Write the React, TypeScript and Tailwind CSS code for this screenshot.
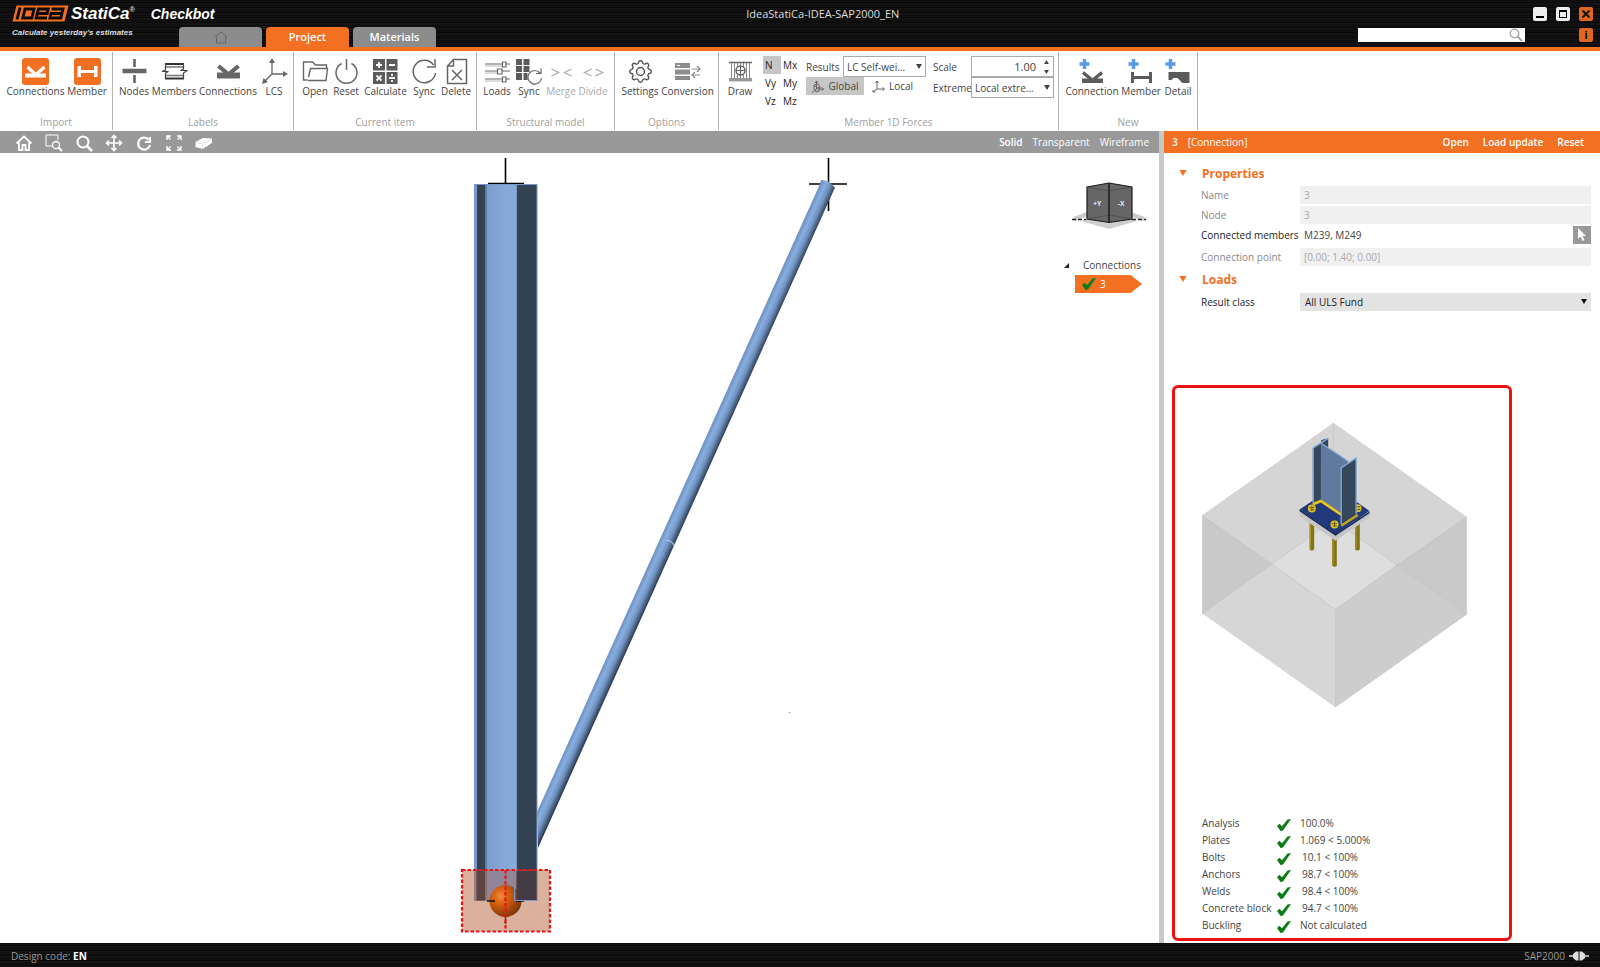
import type { ReactNode } from 'react';
import { BsGear } from 'react-icons/bs';

interface IconProps {
  children: ReactNode;
  viewBox?: string;
  className?: string;
}

function Icon({ children, viewBox = '0 0 27 27', className = 'h-[27px] w-[27px]' }: IconProps) {
  return (
    <svg
      viewBox={viewBox}
      className={className}
      fill="none"
      stroke="#666"
      strokeWidth="1.5"
      aria-hidden="true"
    >
      {children}
    </svg>
  );
}

const icons = {
  importConnections: (
    <Icon>
      <rect width="27" height="27" rx="3" fill="#f36f21" stroke="none" />
      <path d="M3 15.500h21v4H3z" fill="#fff" stroke="none" />
      <path d="M5.500 9l7.500 7M22.500 9L14.500 16" stroke="#fff" strokeWidth="3.200" />
    </Icon>
  ),
  importMember: (
    <Icon>
      <rect width="27" height="27" rx="3" fill="#f36f21" stroke="none" />
      <path d="M3.500 8h3.500v4h13V8h3.500v11H20v-4H7v4H3.500z" fill="#fff" stroke="none" />
    </Icon>
  ),
  nodes: (
    <Icon>
      <path d="M13.500 1v8M13.500 17v8" strokeWidth="2.600" />
      <path d="M1.500 13H25.500" strokeWidth="4.500" />
    </Icon>
  ),
  members: (
    <Icon>
      <path d="M4 6h19M4 20.500h19" stroke="#333" strokeWidth="2" />
      <path d="M4 9h19M4 17.500h19" stroke="#777" strokeWidth="1.500" />
      <path d="M4.500 5v7L1 13.500h6.500L4.500 15v6M22.500 5v6l-3 1.500H26L22.500 15v6" stroke="#444" strokeWidth="1.200" />
    </Icon>
  ),
  labelConnections: (
    <Icon>
      <path d="M2 14.500h23v6H2z" fill="#666" stroke="none" />
      <path d="M3.500 8l9.500 8M23.500 8L14 16" strokeWidth="4.200" />
    </Icon>
  ),
  lcs: (
    <Icon>
      <path d="M11 3v13h13M11 16l-8 8" strokeWidth="1.300" />
      <path d="M11 0l3 5H8zM27 16l-5 3v-6zM1 26l1.500-6L7 24z" fill="#666" stroke="none" />
    </Icon>
  ),
  open: (
    <Icon>
      <path d="M5.500 22H1.500V4h9l3 3h11v3M6 22.500h18l1.500-12H8.500L6.500 19" strokeWidth="1.400" />
    </Icon>
  ),
  reset: (
    <Icon>
      <path d="M13.500 1v11M8.500 5.500a10.500 10.500 0 1 0 10 0" />
    </Icon>
  ),
  calculate: (
    <Icon>
      <path d="M1 1h12v11.500H1zM14.500 1h11v11.500h-11zM1 14h12v12H1zM14.500 14h11v12h-11z" fill="#5b5b5b" stroke="none" />
      <path
        d="M4 7h6M7 4v6M17 7h6M4.500 17.500l5 5M9.500 17.500l-5 5M17 20h6M20 16v2M20 22v2"
        stroke="#fff"
        strokeWidth="1.800"
      />
    </Icon>
  ),
  sync: (
    <Icon>
      <path d="M24.500 15A11.200 11.200 0 1 1 22.500 7M24 1v8h-8" />
    </Icon>
  ),
  remove: (
    <Icon>
      <path d="M10.500 1.500h13v24h-19V8zM10.500 1.500V8h-6M9 12l10 10M19 12L9 22" />
    </Icon>
  ),
  loads: (
    <Icon>
      <path d="M1 6h17M22 6h4M1 13h12M18 13h8M1 21h17M22 21h4" strokeWidth="1.200" />
      <path d="M1 8h17M1 15h12M1 23h17" stroke="#bbb" strokeWidth="1" />
      <path d="M18.500 4h3.500v5h-3.500zM13.500 11H18v5h-4.500zM18.500 19h3.500v5h-3.500z" strokeWidth="1.200" />
    </Icon>
  ),
  modelSync: (
    <Icon>
      <path d="M0 1h6v6H0zM7.500 1h6v6h-6zM0 8h6v6H0zM7.500 8h6v6h-6zM0 15h6v7H0zM7.500 15h4v7h-4z" fill="#5b5b5b" stroke="none" />
      <path d="M25.500 20a6.800 6.800 0 1 1-1.500-5M25 10.500v5h-5" strokeWidth="1.200" />
    </Icon>
  ),
  merge: (
    <Icon>
      <path d="M3.500 11l7 3.500-7 3.500M23.500 11l-7 3.500 7 3.500" stroke="#aaa" strokeWidth="1.300" />
    </Icon>
  ),
  divide: (
    <Icon>
      <path d="M11.500 11l-7 3.500 7 3.500M15.500 11l7 3.500-7 3.500" stroke="#aaa" strokeWidth="1.300" />
    </Icon>
  ),
  conversion: (
    <Icon>
      <path d="M1 5h15v5H1zM1 11.500h15v5H1zM1 18h15v4H1z" fill="#8c8c8c" stroke="none" />
      <path d="M3 7.500h3" stroke="#fff" strokeWidth="1" />
      <path d="M18 11h8M23 8l3 3-3 3M26 17h-8M21 14l-3 3 3 3" stroke="#8c8c8c" strokeWidth="1.200" />
    </Icon>
  ),
  draw: (
    <Icon>
      <path d="M2 4.500h23M2 22.500h23" strokeWidth="1.500" />
      <path d="M2 21.500h23" stroke="#999" strokeWidth="3" />
      <path d="M4.500 5v15M7.500 5v15M10.500 5v4M10.500 17v3M13.500 5v15M16.500 5v4M16.500 17v3M19.500 5v15M22.500 5v15" stroke="#888" strokeWidth="1" />
      <circle cx="13.500" cy="12.500" r="4.500" fill="#fff" />
      <path d="M9 12.500h9M13.500 8v9" strokeWidth="1.200" />
    </Icon>
  ),
  newConnection: (
    <Icon>
      <path d="M5.500 1v10M.500 6h10" stroke="#5b9bea" strokeWidth="3.500" />
      <path d="M3 20.500h21V25H3z" fill="#5b5b5b" stroke="none" />
      <path d="M4 14.500l8.500 7M23 14.500l-8.500 7" stroke="#5b5b5b" strokeWidth="3.500" />
    </Icon>
  ),
  newMember: (
    <Icon>
      <path d="M5.500 1v10M.500 6h10" stroke="#5b9bea" strokeWidth="3.500" />
      <path d="M3 14h3v4h15v-4h3v11h-3v-4H6v4H3z" fill="#5b5b5b" stroke="none" />
    </Icon>
  ),
  newDetail: (
    <Icon>
      <path d="M5.500 1v10M.500 6h10" stroke="#5b9bea" strokeWidth="3.500" />
      <path d="M3.500 14h21v11h-7l-5-5h-4l-2 2h-3z" fill="#5b5b5b" stroke="none" />
    </Icon>
  ),
};

interface RibbonButtonProps {
  icon: ReactNode;
  label: string;
  className: string;
  disabled?: boolean;
}

function RibbonButton({ icon, label, className, disabled }: RibbonButtonProps) {
  return (
    <button
      type="button"
      disabled={disabled}
      className={`flex shrink-0 flex-col items-center whitespace-nowrap leading-3 text-[#444] disabled:text-[#aaa] ${className}`}
    >
      {icon}
      <span>{label}</span>
    </button>
  );
}

interface RibbonGroupProps {
  title: string;
  className: string;
  children: ReactNode;
}

function RibbonGroup({ title, className, children }: RibbonGroupProps) {
  return (
    <section
      className={`my-px flex shrink-0 flex-col justify-between border-r border-[#b5b5b5] pt-1.5 ${className}`}
    >
      <div className="flex items-start pl-1.5">{children}</div>
      <h2 className="text-center leading-4 text-[#a0a0a0]">{title}</h2>
    </section>
  );
}

function Caret({ className = 'h-[5px] w-[6px]' }: { className?: string }) {
  return (
    <svg viewBox="0 0 6 5" className={className} fill="currentColor" aria-hidden="true">
      <path d="M0 0h6L3 5z" />
    </svg>
  );
}

function Check({ className = 'h-3 w-3.5' }: { className?: string }) {
  return (
    <svg viewBox="0 0 14 12" className={className} aria-label="Passed">
      <path d="M0 7l2.500-2.200L5 7.200 10.500.500 14 0 6 11.500 3.500 12z" fill="#0c7d14" />
    </svg>
  );
}

function Logo() {
  return (
    <div className="flex items-center pl-3 font-['Liberation_Sans',sans-serif] font-bold italic text-white">
      <svg viewBox="0 0 57 17" className="h-[17px] w-[57px]" fill="none" role="img" aria-label="IDEA">
        <path d="M4.500.500h52l-4 16H.500z" fill="#f36f21" />
        <g stroke="#0a0a0a" strokeWidth="2.900">
          <path d="M8 2.500L5 14.500" />
          <path d="M13 4h9l-2.200 9h-9z" />
          <path d="M35 13H24.200l2.200-9h9.800l-1.100 4.500h-9" />
          <path d="M39.500 4h11.500l-2.200 9H38l1.100-4.500h10.500" />
        </g>
      </svg>
      <span className="ml-0.5 text-[17px] leading-4">StatiCa</span>
      <sup className="text-[7px] font-normal">®</sup>
      <span className="ml-4 text-sm leading-4">Checkbot</span>
    </div>
  );
}

const tabClass = 'flex h-5 w-[83px] items-center justify-center rounded-t text-[11px] font-semibold text-white';
const windowButton = 'flex h-3.5 w-3.5 items-center justify-center rounded-[2px]';
const brushed =
  'bg-[#0b0b0b] bg-[repeating-linear-gradient(180deg,#000_0px,#191919_1px,#0a0a0a_2px,#070707_3px,#202020_4px,#060606_5px)]';

function TitleBar() {
  return (
    <header className={`shrink-0 border-b-4 border-[#f36f21] ${brushed}`}>
      <div className="flex h-[27px] items-center">
        <Logo />
        <h1 className="flex-1 pr-[102px] text-center text-[11px] text-[#ddd]">IdeaStatiCa-IDEA-SAP2000_EN</h1>
        <div className="flex gap-[9px] pr-[7px]">
          <button type="button" aria-label="Minimize" className={`bg-[#eee] ${windowButton}`}>
            <span className="mt-1.5 h-0.5 w-2 bg-black" />
          </button>
          <button type="button" aria-label="Maximize" className={`bg-[#eee] ${windowButton}`}>
            <span className="h-2 w-2 border border-t-2 border-black" />
          </button>
          <button type="button" aria-label="Close" className={`bg-[#e0661f] ${windowButton}`}>
            <svg viewBox="0 0 8 8" className="h-2 w-2" stroke="#111" strokeWidth="2">
              <path d="M.500.500l7 7M7.500.500l-7 7" />
            </svg>
          </button>
        </div>
      </div>
      <div className="flex h-5 items-start pt-px">
        <p className="w-[179px] pl-3 font-['Liberation_Sans',sans-serif] text-[8px] font-bold italic leading-[10px] text-[#ddd]">
          Calculate yesterday's estimates
        </p>
        <nav className="flex gap-1 self-end">
          <button type="button" aria-label="Home" className={`bg-[#8c8c8c] ${tabClass}`}>
            <Icon viewBox="0 0 14 13" className="h-[13px] w-3.5">
              <path d="M1 6l6-5 6 5M2.500 5.500V12h9V5.500" stroke="#666" strokeWidth="1" />
            </Icon>
          </button>
          <button type="button" className={`bg-[#f36f21] ${tabClass}`}>
            Project
          </button>
          <button type="button" className={`bg-[#8c8c8c] ${tabClass}`}>
            Materials
          </button>
        </nav>
        <label className="ml-auto mr-[54px] flex h-3.5 w-[167px] items-center bg-white pr-0.5">
          <input type="search" aria-label="Search" className="min-w-0 flex-1 px-1 text-[10px] outline-none" />
          <Icon viewBox="0 0 14 14" className="h-3.5 w-3.5">
            <circle cx="5.500" cy="5.500" r="4.200" stroke="#aaa" />
            <path d="M8.500 8.500l4.500 4.500" stroke="#aaa" strokeWidth="2" />
          </Icon>
        </label>
        <button type="button" className={`mr-[7px] bg-[#e0661f] text-[10px] font-bold text-black ${windowButton}`}>
          i
        </button>
      </div>
    </header>
  );
}

const forces = ['N', 'Mx', 'Vy', 'My', 'Vz', 'Mz'];

function ForcesGroup() {
  return (
    <RibbonGroup title="Member 1D Forces" className="w-[340px]">
      <RibbonButton icon={icons.draw} label="Draw" className="w-[30px]" />
      <div className="-mt-0.5 ml-2 grid grid-cols-[18px_19px]">
        {forces.map((force) => (
          <button
            type="button"
            key={force}
            className={`h-[18px] pl-0.5 text-left font-medium text-[#222] ${force === 'N' ? 'bg-[#c6c6c6]' : ''}`}
          >
            {force}
          </button>
        ))}
      </div>
      <div className="-mt-0.5 ml-1.5 w-[120px] text-[#444]">
        <div className="flex items-center justify-between">
          <label htmlFor="results">Results</label>
          <div className="relative">
            <select
              id="results"
              className="block h-[21px] w-[83px] appearance-none border border-[#aaa] bg-white pl-[3px] outline-none"
            >
              <option>LC Self-wei...</option>
            </select>
            <Caret className="pointer-events-none absolute right-1 top-2 h-[5px] w-[6px]" />
          </div>
        </div>
        <div className="flex items-center">
          <button type="button" className="flex h-[18px] w-[58px] items-center justify-center gap-1 bg-[#c6c6c6]">
            <Icon viewBox="0 0 13 13" className="h-[13px] w-[13px]">
              <path d="M5.500 1v8h7M5.500 9L1 12.500M3 5l4-1 2 3-1 4-3 1-2-3zM3 5l3 3 3-1M5.500 1L4 3M5.500 1L7 3M10.500 7.500l2 1.500-2 1.500" strokeWidth="1" />
            </Icon>
            Global
          </button>
          <button type="button" className="ml-2 flex h-[18px] items-center gap-1">
            <Icon viewBox="0 0 13 13" className="h-[13px] w-[13px]">
              <path d="M5 1v8h7M5 9l-4 3M3.500 3L5 1l1.500 2M10.500 7.500l2 1.500-2 1.500M1 10v2h2.500" strokeWidth="1" />
            </Icon>
            Local
          </button>
        </div>
      </div>
      <div className="-mt-0.5 ml-[7px] grid grid-cols-[38px_83px] items-center text-[#444]">
        <label htmlFor="scale">Scale</label>
        <div className="flex h-[21px] items-center border border-[#aaa] pr-1">
          <input
            id="scale"
            type="text"
            defaultValue="1.00"
            className="min-w-0 flex-1 pr-2 text-right text-[11px] outline-none"
          />
          <div className="flex flex-col gap-1.5">
            <button type="button" aria-label="Increase" className="block rotate-180">
              <Caret className="h-1 w-[5px]" />
            </button>
            <button type="button" aria-label="Decrease" className="block">
              <Caret className="h-1 w-[5px]" />
            </button>
          </div>
        </div>
        <label htmlFor="extreme">Extreme</label>
        <div className="relative">
          <select
            id="extreme"
            className="block h-[21px] w-full appearance-none border border-[#aaa] bg-white pl-[3px] outline-none"
          >
            <option>Local extre...</option>
          </select>
          <Caret className="pointer-events-none absolute right-1 top-2 h-[5px] w-[6px]" />
        </div>
      </div>
    </RibbonGroup>
  );
}

function Ribbon() {
  return (
    <div className="flex h-20 shrink-0 overflow-hidden bg-white">
      <RibbonGroup title="Import" className="w-[113px]">
        <RibbonButton icon={icons.importConnections} label="Connections" className="w-[59px]" />
        <RibbonButton icon={icons.importMember} label="Member" className="w-11" />
      </RibbonGroup>
      <RibbonGroup title="Labels" className="w-[181px]">
        <RibbonButton icon={icons.nodes} label="Nodes" className="w-[30px]" />
        <RibbonButton icon={icons.members} label="Members" className="w-[50px]" />
        <RibbonButton icon={icons.labelConnections} label="Connections" className="w-[58px]" />
        <RibbonButton icon={icons.lcs} label="LCS" className="w-[34px]" />
      </RibbonGroup>
      <RibbonGroup title="Current item" className="w-[183px]">
        <RibbonButton icon={icons.open} label="Open" className="w-[30px]" />
        <RibbonButton icon={icons.reset} label="Reset" className="w-8" />
        <RibbonButton icon={icons.calculate} label="Calculate" className="w-[47px]" />
        <RibbonButton icon={icons.sync} label="Sync" className="w-[30px]" />
        <RibbonButton icon={icons.remove} label="Delete" className="w-[34px]" />
      </RibbonGroup>
      <RibbonGroup title="Structural model" className="w-[138px]">
        <RibbonButton icon={icons.loads} label="Loads" className="w-7" />
        <RibbonButton icon={icons.modelSync} label="Sync" className="w-9" />
        <RibbonButton icon={icons.merge} label="Merge" className="w-7" disabled />
        <RibbonButton icon={icons.divide} label="Divide" className="w-9" disabled />
      </RibbonGroup>
      <RibbonGroup title="Options" className="w-[104px]">
        <RibbonButton
          icon={<BsGear className="my-[2px] h-[23px] w-[23px] text-[#555]" />}
          label="Settings"
          className="w-[38px]"
        />
        <RibbonButton icon={icons.conversion} label="Conversion" className="w-[57px]" />
      </RibbonGroup>
      <ForcesGroup />
      <RibbonGroup title="New" className="w-[139px]">
        <RibbonButton icon={icons.newConnection} label="Connection" className="w-[54px]" />
        <RibbonButton icon={icons.newMember} label="Member" className="w-11" />
        <RibbonButton icon={icons.newDetail} label="Detail" className="w-[30px]" />
      </RibbonGroup>
    </div>
  );
}

const viewTools = [
  { name: 'Home view', path: <path d="M1.500 9.500L9 2.500l7.500 7M4 8.500V16h3.500v-5h3v5H14V8.500" strokeWidth="1.800" /> },
  {
    name: 'Zoom window',
    path: (
      <>
        <path d="M7 12H1V1h12v5" strokeWidth="1" />
        <circle cx="11" cy="11" r="3.500" strokeWidth="1.300" />
        <path d="M13.500 13.500L17 17" strokeWidth="2" />
      </>
    ),
  },
  {
    name: 'Zoom',
    path: (
      <>
        <circle cx="8" cy="8" r="5.500" strokeWidth="2" />
        <path d="M12 12l5 5" strokeWidth="2.500" />
      </>
    ),
  },
  {
    name: 'Pan',
    path: <path d="M9 1.500v15M1.500 9h15M6.500 4L9 1.500 11.500 4M6.500 14L9 16.500l2.500-2.500M4 6.500L1.500 9 4 11.500M14 6.500L16.500 9 14 11.500" strokeWidth="1.600" />,
  },
  { name: 'Rotate', path: <path d="M15 11a6 6 0 1 1-1.500-5.500M15 3v5h-5" strokeWidth="2.200" /> },
  {
    name: 'Fit to screen',
    path: <path d="M2 6V2h4M2 2l3.500 3.500M12 2h4v4M16 2l-3.500 3.500M2 12v4h4M2 16l3.500-3.500M12 16h4v-4M16 16l-3.500-3.500" strokeWidth="1.400" />,
  },
  {
    name: 'Section',
    path: (
      <>
        <path d="M.500 8L8 4l9 .5v4.500l-9.500 6-7-2z" fill="#fff" stroke="none" />
        <path d="M.500 8.500l7 1.500L17 5M7.500 10v5" stroke="#ccc" strokeWidth=".6" />
      </>
    ),
  },
];

function ViewToolbar() {
  return (
    <div className="flex h-[22px] shrink-0 items-center bg-[#999] text-white">
      <div className="flex gap-3 pl-[15px] pt-0.5">
        {viewTools.map((tool) => (
          <button type="button" key={tool.name} aria-label={tool.name}>
            <svg viewBox="0 0 18 18" className="h-[18px] w-[18px]" fill="none" stroke="#fff">
              {tool.path}
            </svg>
          </button>
        ))}
      </div>
      <div className="ml-auto flex gap-2.5 pr-2.5">
        <button type="button" className="font-semibold">
          Solid
        </button>
        <button type="button">Transparent</button>
        <button type="button">Wireframe</button>
      </div>
    </div>
  );
}

function Model() {
  return (
    <svg viewBox="0 0 1159 790" className="h-full w-full" role="img" aria-label="Structural model">
      <defs>
        <linearGradient
          id="tube"
          gradientUnits="userSpaceOnUse"
          x1="786"
          y1="107"
          x2="800"
          y2="113.320"
        >
          <stop offset="0" stopColor="#6f90bf" />
          <stop offset="0.300" stopColor="#88aee0" />
          <stop offset="0.600" stopColor="#7294c4" />
          <stop offset="1" stopColor="#2d3d53" />
        </linearGradient>
        <linearGradient id="web" x1="0" x2="1">
          <stop offset="0" stopColor="#7c9dcb" />
          <stop offset="0.500" stopColor="#84a7d6" />
          <stop offset="1" stopColor="#87aad8" />
        </linearGradient>
        <radialGradient id="ball" cx="0.350" cy="0.350" r="0.700">
          <stop offset="0" stopColor="#f08b43" />
          <stop offset="0.350" stopColor="#d9600f" />
          <stop offset="1" stopColor="#7c3508" />
        </radialGradient>
      </defs>
      <path d="M828.500 5v53M809 31h38" stroke="#000" strokeWidth="1.600" />
      <path d="M821 27l7 1 7 6.500L538 695l-1-36L820 31z" fill="url(#tube)" />
      <path d="M666 387q7 1 8 6" fill="none" stroke="#a9c8f2" strokeWidth="1.200" />
      <path d="M505.500 5v26M488 30.500h36" stroke="#000" strokeWidth="1.600" />
      <rect x="474" y="31" width="63.500" height="717" fill="#7899c8" />
      <rect x="477" y="32" width="8" height="715" fill="#34434f" />
      <rect x="485" y="32" width="2" height="715" fill="#5f7ca4" />
      <rect x="487" y="32" width="29" height="715" fill="url(#web)" />
      <rect x="517" y="32" width="19.500" height="715" fill="#334252" />
      <path d="M505.500 764v7" stroke="#111" strokeWidth="1.500" />
      <path d="M462 717h88v61.500h-88z" fill="#b4643a" fillOpacity="0.500" />
      <path d="M476.500 718h8.500v29.500h-8.500z" fill="#5d4442" />
      <path d="M487 718h29v29.500h-29z" fill="#8f8798" />
      <circle cx="505.500" cy="748" r="16" fill="url(#ball)" />
      <path d="M487 748h8M516 748h8" stroke="#111" strokeWidth="1.500" />
      <path d="M516.500 718h20v29h-20z" fill="#443c45" />
      <path d="M514.500 733v14.500h23" fill="none" stroke="#7899c8" strokeWidth="1" />
      <path
        d="M462 717h88v61.500h-88zM505.500 717v61.500"
        fill="none"
        stroke="#e8141a"
        strokeWidth="2.200"
        strokeDasharray="3.500 2"
      />
      <circle cx="789.500" cy="559.500" r="0.800" fill="#999" />
    </svg>
  );
}

function Navigator() {
  return (
    <div className="absolute right-3 top-7 flex w-[83px] flex-col items-end">
      <svg viewBox="0 0 76 50" className="h-[50px] w-[76px]" role="img" aria-label="View cube">
        <path d="M3 38l14-5M73 38l-14-5" stroke="#ccc" strokeWidth="4" />
        <path d="M10 40l28-7 28 7-28 8z" fill="#cfcfcf" />
        <path d="M1 38.500h14M61 38.500h14" stroke="#222" strokeWidth="1.300" strokeDasharray="4 2" />
        <path d="M16 6l22-4 23 4v32l-23 3.500L16 38z" fill="#666" stroke="#1c1c1c" strokeWidth="1.200" />
        <path d="M16 6l22 4 23-4M16 38l22-4 23 4" fill="none" stroke="#4a4a4a" strokeWidth=".8" />
        <path d="M38 2v39.500" stroke="#1c1c1c" strokeWidth="1.500" />
        <text x="26" y="25" textAnchor="middle" fill="#fff" fontSize="7" fontWeight="600">
          +Y
        </text>
        <text x="50" y="25" textAnchor="middle" fill="#fff" fontSize="7" fontWeight="600">
          -X
        </text>
      </svg>
      <div className="mt-6 w-full pt-0.5">
        <button type="button" className="flex items-center text-[#444]">
          <svg viewBox="0 0 5 5" className="mr-3.5 h-[5px] w-[5px]" aria-hidden="true">
            <path d="M5 0v5H0z" fill="#222" />
          </svg>
          Connections
        </button>
        <button
          type="button"
          className="ml-[11px] mt-0.5 flex h-[18px] w-[67px] items-center gap-1 bg-[#f36f21] pl-[7px] text-white [clip-path:polygon(0_0,83%_0,100%_50%,83%_100%,0_100%)]"
        >
          <Check />
          3
        </button>
      </div>
    </div>
  );
}

function SectionTitle({ children }: { children: ReactNode }) {
  return (
    <h3 className="flex h-5 items-center text-xs font-bold text-[#f36f21]">
      <Caret className="mb-0.5 mr-[15px] h-[6px] w-2" />
      {children}
    </h3>
  );
}

function ReadOnlyRow({ id, label, value }: { id: string; label: string; value: string }) {
  return (
    <div className="flex items-center">
      <label htmlFor={id} className="w-[99px] text-[#888]">
        {label}
      </label>
      <input id={id} readOnly value={value} className="h-[18px] min-w-0 flex-1 bg-[#f0f0f0] pl-1 text-[#aaa] outline-none" />
    </div>
  );
}

function ConnectionPreview() {
  return (
    <svg viewBox="128 128 794 856" className="h-[285px] w-[265px]" role="img" aria-label="Connection preview">
      <path d="M522 128L922 410V703L528 982 128 700V405z" fill="#d6d6d6" />
      <path d="M522 128L922 410 528 688 128 405z" fill="#d5d5d5" />
      <path d="M522 420L712 554 528 688 337 552z" fill="#dedede" />
      <path d="M128 405L337 552 128 700zM922 410L712 554 922 703z" fill="#c9c9c9" />
      <path d="M528 688L712 554 922 703 528 982z" fill="#cdcdcd" />
      <path d="M522 128V420L128 700M522 420L922 703M128 405L528 688V982M528 688L922 410" fill="none" stroke="#c2c2c2" strokeWidth="2" />
      <path d="M450 400h14v108q-7 6-14 0zM587 400h14v108q-7 6-14 0zM518 455h14v102q-7 6-14 0z" fill="#857414" />
      <path d="M453 400v108M590 400v108M521 455v102" stroke="#a99728" strokeWidth="3" />
      <path d="M420 392l108 74 102-70v16L528 482 420 408z" fill="#c6c6c9" />
      <path d="M420 388L525 318 630 392 528 464z" fill="#22397c" />
      <path d="M420 388l108 74 102-68v5L528 467 420 393z" fill="#152554" />
      <path d="M485 180L506 173V380L485 370z" fill="#33475c" />
      <path d="M460 202L485 187V364L460 376z" fill="#34485e" />
      <path d="M484 188L566 243V410L484 362z" fill="#61799c" />
      <path d="M460 372l24-10 68 46" fill="none" stroke="#e8c81c" strokeWidth="8" />
      <path d="M545 436l50-32" stroke="#c0a41c" strokeWidth="8" />
      <path d="M545 263L590 233V402L545 432z" fill="#34475b" />
      <path d="M461 376V203L506 174M484 188l82 55M545 432V263L590 233V402" fill="none" stroke="#86aad8" strokeWidth="4" />
      <path d="M592 372q14-2 14 12t-14 12z" fill="#e0c222" />
      <path d="M594 380h8M594 388h8" stroke="#514408" strokeWidth="3" />
      <circle cx="457" cy="385" r="12" fill="#e0c222" />
      <circle cx="525" cy="433" r="12" fill="#e0c222" />
      <path d="M449 382h15M452 389h12M457 376v16M517 430h15M520 437h12M525 424v16" stroke="#6d5d0b" strokeWidth="3" />
    </svg>
  );
}

const checks = [
  { name: 'Analysis', value: '100.0%' },
  { name: 'Plates', value: '1.069 < 5.000%' },
  { name: 'Bolts', value: '10.1 < 100%', indent: true },
  { name: 'Anchors', value: '98.7 < 100%', indent: true },
  { name: 'Welds', value: '98.4 < 100%', indent: true },
  { name: 'Concrete block', value: '94.7 < 100%', indent: true },
  { name: 'Buckling', value: 'Not calculated' },
];

function DetailPanel() {
  return (
    <aside className="flex w-[441px] shrink-0 flex-col border-l-[5px] border-[#c8c8c8] bg-white">
      <header className="flex h-[22px] shrink-0 items-center bg-[#f36f21] px-2 text-white">
        <span className="font-semibold">3</span>
        <span className="ml-2.5">[Connection]</span>
        <div className="ml-auto flex gap-3.5 pr-2 font-semibold">
          <button type="button">Open</button>
          <button type="button">Load update</button>
          <button type="button">Reset</button>
        </div>
      </header>
      <div className="shrink-0 pl-[15px] pr-[9px] pt-[11px]">
        <SectionTitle>Properties</SectionTitle>
        <div className="flex flex-col gap-0.5 pl-[22px] pt-0.5">
          <ReadOnlyRow id="name" label="Name" value="3" />
          <ReadOnlyRow id="node" label="Node" value="3" />
          <div className="flex items-center">
            <span className="w-[99px] whitespace-nowrap font-medium text-[#222]">Connected members</span>
            <span className="pl-1 text-[#444]">M239, M249</span>
            <button
              type="button"
              aria-label="Select members"
              className="ml-auto flex h-[18px] w-[18px] items-center justify-center bg-[#999]"
            >
              <svg viewBox="0 0 10 14" className="h-3.5 w-2.5" fill="#fff">
                <path d="M1 0v11l2.500-2.500L5.500 13l2-1-2-4H9z" />
              </svg>
            </button>
          </div>
          <div className="mt-0.5">
            <ReadOnlyRow id="point" label="Connection point" value="[0.00; 1.40; 0.00]" />
          </div>
        </div>
        <div className="pt-1">
          <SectionTitle>Loads</SectionTitle>
        </div>
        <div className="flex items-center pl-[22px] pt-[3px]">
          <label htmlFor="result-class" className="w-[99px] font-medium text-[#222]">
            Result class
          </label>
          <div className="relative flex-1">
            <select
              id="result-class"
              className="block h-[18px] w-full appearance-none bg-[#e3e3e3] pl-[5px] text-[#222] outline-none"
            >
              <option>All ULS Fund</option>
            </select>
            <Caret className="pointer-events-none absolute right-1 top-1.5 h-[5px] w-[6px]" />
          </div>
        </div>
      </div>
      <div className="mb-0.5 ml-2 mt-[74px] flex w-[340px] flex-1 flex-col justify-between rounded-md border-[3px] border-[#ee1111] pl-[27px] pt-[35px]">
        <ConnectionPreview />
        <table className="mb-[5px] w-[200px] text-left text-[#444]">
          <tbody>
            {checks.map((check) => (
              <tr key={check.name} className="h-[17px] leading-4">
                <th scope="row" className="w-[75px] whitespace-nowrap p-0 font-normal">
                  {check.name}
                </th>
                <td className="w-[23px] p-0 pt-1">
                  <Check />
                </td>
                <td className={check.indent ? 'p-0 pl-0.5' : 'p-0'}>{check.value}</td>
              </tr>
            ))}
          </tbody>
        </table>
      </div>
    </aside>
  );
}

export default function App() {
  return (
    <div className="flex h-screen min-h-[800px] flex-col overflow-hidden bg-white font-['Open_Sans','Noto_Sans',sans-serif] text-[10px] leading-4">
      <TitleBar />
      <Ribbon />
      <div className="flex min-h-0 flex-1">
        <main className="flex min-w-0 flex-1 flex-col">
          <ViewToolbar />
          <div className="relative min-h-0 flex-1">
            <Model />
            <Navigator />
          </div>
        </main>
        <DetailPanel />
      </div>
      <footer className={`flex h-6 shrink-0 items-center justify-between px-[11px] pt-0.5 text-[#999] ${brushed}`}>
        <span>
          Design code: <b className="text-white">EN</b>
        </span>
        <span className="flex items-center gap-1">
          SAP2000
          <svg viewBox="0 0 20 10" className="h-2.5 w-5" fill="#ddd" aria-hidden="true">
            <path d="M0 4.300h4V5.700H0zM16 4.300h4V5.700h-4zM4 3l3-2.500h2.500v9H7L4 7zM10.500.500H13L16 3v4l-3 2.500h-2.500z" />
          </svg>
        </span>
      </footer>
    </div>
  );
}
